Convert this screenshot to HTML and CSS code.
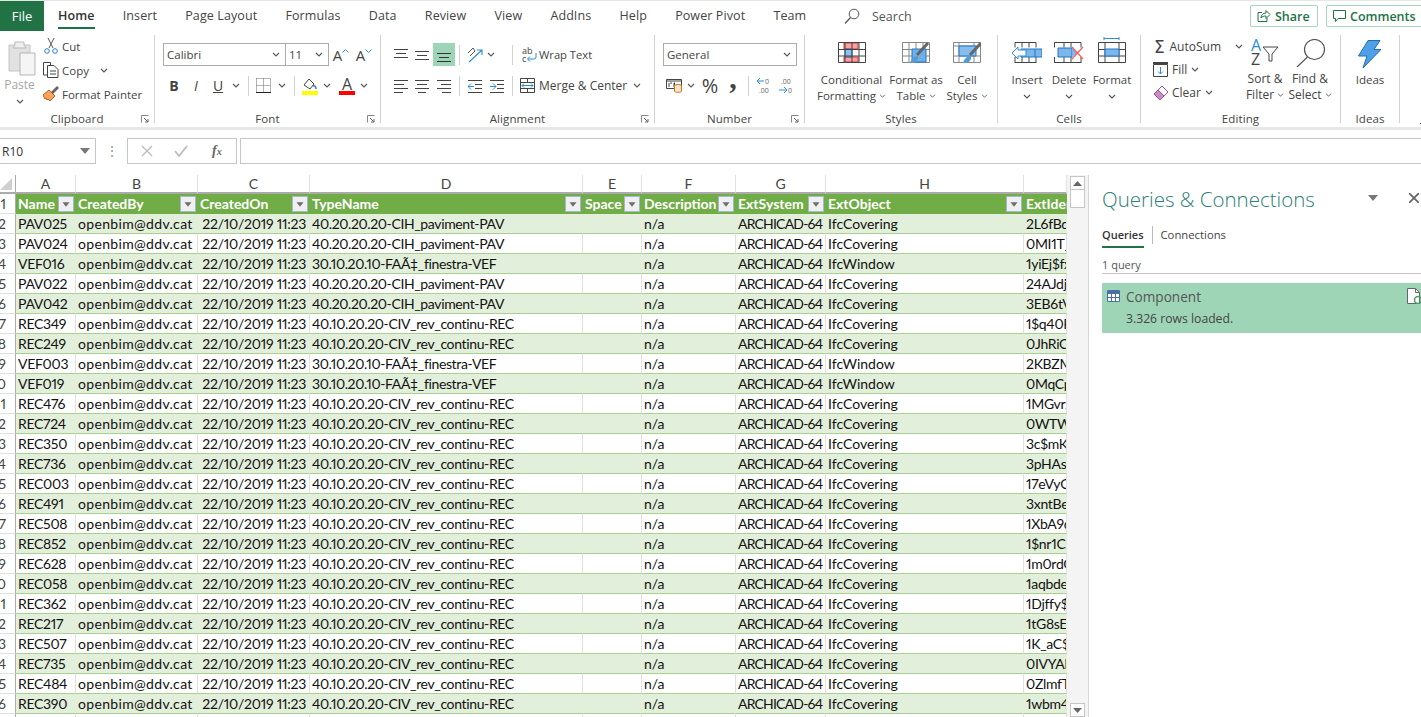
FILE: index.html
```html
<!DOCTYPE html>
<html lang="en">
<head>
<meta charset="utf-8">
<title>Excel</title>
<link rel="stylesheet" href="styles.css">
</head>
<body>
<svg class="defs" width="0" height="0">
  <symbol id="chev" viewBox="0 0 8 5"><path d="M1 1l3 3 3-3" fill="none" stroke="#555" stroke-width="1.1"/></symbol>
  <symbol id="launch" viewBox="0 0 8 8"><path d="M.5 .5h7M.5 .5v7" stroke="#888" fill="none"/><path d="M3 3l4 4M7 4v3H4" stroke="#666" fill="none"/></symbol>
  <symbol id="tri" viewBox="0 0 16 16"><path d="M4 6h8l-4 5z" fill="#6d6d6d"/></symbol>
  <symbol id="al-top" viewBox="0 0 14 14"><path d="M0 1.5h14M2 5.5h10M0 9.5h14" stroke="#444"/></symbol>
  <symbol id="al-mid" viewBox="0 0 14 14"><path d="M0 3.5h14M2 7.5h10M0 11.5h14" stroke="#444"/></symbol>
  <symbol id="al-bot" viewBox="0 0 14 14"><path d="M0 5.5h14M2 9.5h10M0 13.5h14" stroke="#333"/></symbol>
  <symbol id="al-l" viewBox="0 0 14 14"><path d="M0 1.5h14M0 5.5h10M0 9.5h14M0 13.5h9" stroke="#444"/></symbol>
  <symbol id="al-c" viewBox="0 0 14 14"><path d="M0 1.5h14M2 5.5h10M0 9.5h14M3 13.5h8" stroke="#444"/></symbol>
  <symbol id="al-r" viewBox="0 0 14 14"><path d="M0 1.5h14M4 5.5h10M0 9.5h14M5 13.5h9" stroke="#444"/></symbol>
</svg>

<header class="tabbar">
  <div class="file-tab">File</div>
  <nav class="tabs">
    <span class="tab tab-on">Home</span><span class="tab">Insert</span><span class="tab">Page Layout</span><span class="tab">Formulas</span><span class="tab">Data</span><span class="tab">Review</span><span class="tab">View</span><span class="tab">AddIns</span><span class="tab">Help</span><span class="tab">Power Pivot</span><span class="tab">Team</span>
  </nav>
  <div class="search">
    <svg width="16" height="17" viewBox="0 0 16 17"><circle cx="10" cy="6" r="4.8" fill="none" stroke="#555"/><path d="M6.5 9.5L1 15.5" stroke="#555" stroke-width="1.2"/></svg>
    <span>Search</span>
  </div>
  <button class="act act-share">
    <svg width="14" height="14" viewBox="0 0 14 14"><path d="M5 3.5H1v9h9V9" fill="none" stroke="#217346"/><path d="M4 9c0-3 2-5 5-5V1.5l4 4-4 4V7C7 7 5 7.500 4 9z" fill="none" stroke="#217346"/></svg>
    Share
  </button>
  <button class="act act-comments">
    <svg width="13" height="13" viewBox="0 0 13 13"><path d="M.5 .5h12v8H5l-2.500 3v-3h-2z" fill="none" stroke="#217346"/></svg>
    Comments
  </button>
</header>

<section class="ribbon">
  <div class="group g-clip">
    <div class="gbody clip-body">
      <div class="paste">
        <svg width="28" height="37" viewBox="0 0 28 37"><path d="M1 5h21v26H1z" fill="#e1e1e1" stroke="#c4c4c4"/><path d="M7 5V2h9v3l2 3H5z" fill="#eee" stroke="#bbb"/><path d="M12 13h15v22H12z" fill="#f5f5f5" stroke="#b5b5b5"/></svg>
        <span class="paste-t">Paste</span>
        <svg class="chev-paste" width="8" height="5"><use href="#chev"/></svg>
      </div>
      <div class="clip-col">
        <div class="clip-row">
          <svg width="16" height="16" viewBox="0 0 16 16"><path d="M5 0l5 10M11 0L6 10" stroke="#555" fill="none"/><circle cx="4" cy="13" r="2.300" fill="none" stroke="#2b7cd3"/><circle cx="12" cy="13" r="2.300" fill="none" stroke="#2b7cd3"/></svg>
          <span>Cut</span>
        </div>
        <div class="clip-row">
          <svg width="16" height="16" viewBox="0 0 16 16"><path d="M4 13H.5V.5h7V3" fill="none" stroke="#444"/><path d="M4.500 3.500H11l4 4v8H4.500z" fill="#fff" stroke="#444"/><path d="M7 9h6M7 12h6" stroke="#444"/></svg>
          <span>Copy</span>
          <svg class="chev-copy" width="8" height="5"><use href="#chev"/></svg>
        </div>
        <div class="clip-row">
          <svg width="16" height="16" viewBox="0 0 16 16"><path d="M0 9l6-5 6 6-5 5-2-2-1 1-1-2-1 1z" fill="#f4a460" stroke="#c55a11"/><path d="M8 6l6-6 2 2-6 6" fill="#666"/></svg>
          <span>Format Painter</span>
        </div>
      </div>
    </div>
    <div class="glabel">Clipboard</div>
    <svg class="launcher" width="8" height="8"><use href="#launch"/></svg>
  </div>

  <div class="group g-font">
    <div class="gbody">
      <div class="row1 font-r1">
        <div class="combo combo-font"><span>Calibri</span><svg width="8" height="5"><use href="#chev"/></svg></div>
        <div class="combo combo-size"><span>11</span><svg width="8" height="5"><use href="#chev"/></svg></div>
        <div class="grow-a">A<svg class="cap" width="7" height="4" viewBox="0 0 7 4"><path d="M.5 3.500l3-3 3 3" fill="none" stroke="#2b8fd8"/></svg></div>
        <div class="grow-a">A<svg class="cap" width="7" height="4" viewBox="0 0 7 4"><path d="M.5 .5l3 3 3-3" fill="none" stroke="#2b8fd8"/></svg></div>
      </div>
      <div class="row2 font-r2">
        <b class="fb">B</b><i class="fi">I</i><u class="fu">U</u>
        <svg width="8" height="5"><use href="#chev"/></svg>
        <span class="sep"></span>
        <svg width="15" height="15" viewBox="0 0 15 15"><path d="M.5 .5h14M.5 7.500h14M7.500 .5v14M.5 .5v14M14.500 .5v14" stroke="#666" stroke-dasharray="1 1" fill="none"/><path d="M0 14.500h15" stroke="#222"/></svg>
        <svg width="8" height="5"><use href="#chev"/></svg>
        <span class="sep"></span>
        <svg width="16" height="18" viewBox="0 0 16 18"><path d="M2 8l5-6 5 5-4 5z" fill="#fff" stroke="#444"/><path d="M11 9c2-1 3 1 3 3" stroke="#2b7cd3" stroke-width="1.500" fill="none"/><rect y="14" width="16" height="4" fill="#ff0"/></svg>
        <svg width="8" height="5"><use href="#chev"/></svg>
        <div class="fcolor">A<span></span></div>
        <svg width="8" height="5"><use href="#chev"/></svg>
      </div>
    </div>
    <div class="glabel">Font</div>
    <svg class="launcher" width="8" height="8"><use href="#launch"/></svg>
  </div>

  <div class="group g-align">
    <div class="gbody">
      <div class="row1 al-r1">
        <svg width="14" height="14"><use href="#al-top"/></svg>
        <svg width="14" height="14"><use href="#al-mid"/></svg>
        <span class="al-on"><svg width="14" height="14"><use href="#al-bot"/></svg></span>
        <span class="sep"></span>
        <svg width="17" height="16" viewBox="0 0 17 16"><path d="M1 6l5-5 2 3M3 9l5-5" stroke="#555" fill="none"/><path d="M2 15L15 3M10 3h5v5" stroke="#2b8fd8" stroke-width="1.100" fill="none"/></svg>
        <svg width="8" height="5"><use href="#chev"/></svg>
        <i></i>
        <span class="sep"></span>
        <i></i>
        <svg width="15" height="16" viewBox="0 0 15 16"><text x="0" y="7" class="svgt">ab</text><text x="0" y="15" class="svgt">c</text><path d="M14 6v4a2 2 0 0 1-2 2H6M8 9.500L5.500 12 8 14.500" stroke="#2b8fd8" fill="none"/></svg>
        <span class="rt">Wrap Text</span>
      </div>
      <div class="row2 al-r2">
        <svg width="14" height="14"><use href="#al-l"/></svg>
        <svg width="14" height="14"><use href="#al-c"/></svg>
        <svg width="14" height="14"><use href="#al-r"/></svg>
        <span class="sep"></span>
        <svg width="14" height="14" viewBox="0 0 14 14"><path d="M0 1.500h14M7 5.500h7M7 9.500h7M0 13.500h14" stroke="#444"/><path d="M6 7.500H0M3 4.500l-3 3 3 3" stroke="#2b8fd8" fill="none"/></svg>
        <svg width="14" height="14" viewBox="0 0 14 14"><path d="M0 1.500h14M7 5.500h7M7 9.500h7M0 13.500h14" stroke="#444"/><path d="M0 7.500h6M3 4.500l3 3-3 3" stroke="#2b8fd8" fill="none"/></svg>
        <span class="sep"></span>
        <i></i>
        <svg width="15" height="15" viewBox="0 0 15 15"><path d="M.5 .5h14v14H.5zM.5 4.500h14M.5 10.500h14M7.500 .5v4M7.500 10.500v4" fill="none" stroke="#444"/><path d="M2 7.500h11M4 5.500l-2 2 2 2M11 5.500l2 2-2 2" stroke="#2b8fd8" fill="none"/></svg>
        <span class="rt">Merge &amp; Center</span>
        <svg width="8" height="5"><use href="#chev"/></svg>
      </div>
    </div>
    <div class="glabel">Alignment</div>
    <svg class="launcher" width="8" height="8"><use href="#launch"/></svg>
  </div>

  <div class="group g-num">
    <div class="gbody">
      <div class="row1 num-r1">
        <div class="combo combo-num"><span>General</span><svg width="8" height="5"><use href="#chev"/></svg></div>
      </div>
      <div class="row2 num-r2">
        <svg width="16" height="15" viewBox="0 0 16 15"><path d="M.5 1.500h15v9H.5zM.5 3h15" fill="none" stroke="#444"/><path d="M3 5v4M6 5H4M9 5h-1v4" stroke="#444"/><ellipse cx="12" cy="8" rx="3.500" ry="1.500" fill="#fbe5d0" stroke="#d9730d"/><path d="M8.500 8v5.500c0 1 7 1 7 0V8" fill="#fbe5d0" stroke="#d9730d"/></svg>
        <svg width="8" height="5"><use href="#chev"/></svg>
        <span class="pct">%</span>
        <span class="comma">,</span>
        <span class="sep"></span>
        <i></i>
        <svg width="16" height="18" viewBox="0 0 16 18"><text x="9" y="7" class="svgn">0</text><text x="3" y="16" class="svgn">.00</text><path d="M8 4H1M4 1L1 4l3 3" stroke="#2b8fd8" fill="none"/></svg>
        <i></i>
        <svg width="16" height="18" viewBox="0 0 16 18"><text x="3" y="7" class="svgn">.00</text><text x="10" y="16" class="svgn">0</text><path d="M1 13h8M6 10l3 3-3 3" stroke="#2b8fd8" fill="none"/></svg>
      </div>
    </div>
    <div class="glabel">Number</div>
    <svg class="launcher" width="8" height="8"><use href="#launch"/></svg>
  </div>

  <div class="group g-styles">
    <div class="gbody bigs styles-cols">
      <div class="big">
        <svg class="bi" width="28" height="21" viewBox="0 0 28 21"><path d="M6 1h14v6H6zM6 15h14v5H6z" fill="#f9a0a0" stroke="#d9363e"/><path d="M7 7h7v8H7z" fill="#8cc0ee" stroke="#1e78c8"/><path d="M.5 .5h27v20H.5zM.5 7.500h27M.5 14h27M7 .5v20M14 .5v20M21 .5v20" fill="none" stroke="#444"/></svg>
        <span>Conditional</span><span>Formatting <svg width="7" height="4"><use href="#chev"/></svg></span>
      </div>
      <div class="big">
        <svg class="bi" width="28" height="21" viewBox="0 0 28 21"><path d="M.5 .5h27v20H.5zM.5 7.500h27M.5 14h27M7 .5v20M14 .5v20M21 .5v20" fill="none" stroke="#888"/><path d="M10 7h14v13H10z" fill="#6fb0e8" stroke="#1e78c8"/><path d="M26 1L15 13" stroke="#666" stroke-width="3"/><path d="M8 21c1-4 4-7 7-7 3 1 0 6-3 7z" fill="#5a9bd5"/></svg>
        <span>Format as</span><span>Table <svg width="7" height="4"><use href="#chev"/></svg></span>
      </div>
      <div class="big">
        <svg class="bi" width="28" height="21" viewBox="0 0 28 21"><path d="M.5 .5h27v20H.5zM.5 4h27M.5 14h27M6 .5v20M21 .5v20" fill="none" stroke="#888"/><path d="M6 4h17v10H6z" fill="#86bdee" stroke="#1e78c8"/><path d="M28 1L17 13" stroke="#666" stroke-width="3"/><path d="M10 21c1-4 4-7 7-7 3 1 0 6-3 7z" fill="#5a9bd5"/></svg>
        <span>Cell</span><span>Styles <svg width="7" height="4"><use href="#chev"/></svg></span>
      </div>
    </div>
    <div class="glabel">Styles</div>
  </div>

  <div class="group g-cells">
    <div class="gbody bigs cells-cols">
      <div class="big">
        <svg class="bi" width="30" height="21" viewBox="0 0 30 21"><path d="M3 .5h21M3 20.500h21M3 .5v5M3 15v6M10 .5v5M10 15v6M17 .5v5M17 15v6M24 .5v5M24 15v6" stroke="#444" fill="none"/><path d="M9 7h21v8H9z" fill="#7cb6ea" stroke="#1e78c8"/><path d="M23 7v8" stroke="#1e78c8"/><path d="M14 8H6V5l-6 6 6 6v-3h8z" fill="#fff" stroke="#2b8fd8"/></svg>
        <span>Insert</span><svg class="cv" width="8" height="5"><use href="#chev"/></svg>
      </div>
      <div class="big">
        <svg class="bi" width="30" height="21" viewBox="0 0 30 21"><path d="M.5 .5H27M.5 20.500H27M.5 .5v5M.5 15v6M10 .5v5M10 15v6M17 .5v5M17 15v6M27 .5v5M27 15v6" stroke="#444" fill="none"/><path d="M4 6h14v9H4z" fill="#7cb6ea" stroke="#1e78c8"/><path d="M18 6l6 4.500-6 4.500" fill="#7cb6ea"/><path d="M18 5l11 12M29 5L18 17" stroke="#ff5a5a" stroke-width="1.200"/></svg>
        <span>Delete</span><svg class="cv" width="8" height="5"><use href="#chev"/></svg>
      </div>
      <div class="big">
        <svg class="bi bi-fmt" width="28" height="26" viewBox="0 0 28 26"><path d="M6 1.500h15M6 0v3M21 0v3" stroke="#2b8fd8" fill="none"/><path d="M.5 5.500h27v20H.5zM.5 12.500h27M.5 19h27M7 5.500v20M21 5.500v20" fill="none" stroke="#444"/><path d="M7 12h14v7H7z" fill="#7cb6ea" stroke="#1e78c8"/></svg>
        <span>Format</span><svg class="cv" width="8" height="5"><use href="#chev"/></svg>
      </div>
    </div>
    <div class="glabel">Cells</div>
  </div>

  <div class="group g-edit">
    <div class="gbody edit-body">
      <div class="edit-col">
        <div class="edit-row">
          <span class="sigma">Σ</span><span>AutoSum</span><svg class="chev-auto" width="8" height="5"><use href="#chev"/></svg>
        </div>
        <div class="edit-row er-fill">
          <svg width="15" height="15" viewBox="0 0 15 15"><path d="M.5 2.500h14v12H.5z" fill="none" stroke="#444"/><path d="M0 1h15" stroke="#444" stroke-width="2"/><path d="M7.500 5v7M5 9.500l2.500 2.500L10 9.500" stroke="#2b8fd8" fill="none"/></svg>
          <span>Fill</span><svg width="8" height="5"><use href="#chev"/></svg>
        </div>
        <div class="edit-row er-clear">
          <svg width="16" height="16" viewBox="0 0 16 16"><path d="M1 9l8-8 6 6-8 8z" fill="#fff" stroke="#a64ca6"/><path d="M1 9l4-4 6 6-4 4z" fill="#c58fc5" stroke="#a64ca6"/></svg>
          <span>Clear</span><svg width="8" height="5"><use href="#chev"/></svg>
        </div>
      </div>
      <div class="big big-tall">
        <svg class="bi-tall" width="28" height="28" viewBox="0 0 28 28"><text x="0" y="12" class="az az-a">A</text><text x="0" y="26" class="az">Z</text><path d="M12 8h15l-6 7v7h-3v-7z" fill="#fff" stroke="#444"/></svg>
        <span>Sort &amp;</span><span>Filter <svg width="7" height="4"><use href="#chev"/></svg></span>
      </div>
      <div class="big big-tall">
        <svg class="bi-tall" width="29" height="28" viewBox="0 0 29 28"><circle cx="18.500" cy="10.500" r="10" fill="#fff" stroke="#555" stroke-width="1.200"/><path d="M11.500 18L1 28" stroke="#555" stroke-width="1.200"/></svg>
        <span>Find &amp;</span><span>Select <svg width="7" height="4"><use href="#chev"/></svg></span>
      </div>
    </div>
    <div class="glabel">Editing</div>
  </div>

  <div class="group g-ideas">
    <div class="gbody ideas-body">
      <div class="big big-ideas">
        <svg class="bi-idea" width="23" height="28" viewBox="0 0 23 28"><path d="M10 .5h12l-6 9h7L5 28l4-12H.5z" fill="#4fa0e6" stroke="#1c6fb8"/></svg>
        <span>Ideas</span>
      </div>
    </div>
    <div class="glabel">Ideas</div>
  </div>
  <div class="g-end"><svg width="8" height="5" viewBox="0 0 8 5"><path d="M1 4l3-3 3 3" fill="none" stroke="#555"/></svg></div>
</section>

<section class="fbar">
  <div class="namebox"><span>R10</span><svg width="10" height="6" viewBox="0 0 10 6"><path d="M0 0h10L5 6z" fill="#777"/></svg></div>
  <div class="fdots">⋮</div>
  <div class="fbtns">
    <svg width="12" height="12" viewBox="0 0 12 12"><path d="M1 1l10 10M11 1L1 11" stroke="#bbb" stroke-width="1.400"/></svg>
    <svg width="14" height="12" viewBox="0 0 14 12"><path d="M1 6l4 5 8-10" stroke="#bbb" stroke-width="1.800" fill="none"/></svg>
    <span class="fx">f<small>x</small></span>
  </div>
  <div class="finput"></div>
</section>

<main class="sheetwrap">
  <div class="grid-clip">
    <table class="sheet">
      <colgroup><col class="c0"><col class="c1"><col class="c2"><col class="c3"><col class="c4"><col class="c5"><col class="c6"><col class="c7"><col class="c8"><col class="c9"></colgroup>
      <thead>
        <tr class="colhead"><th class="corner"><svg width="12" height="12" viewBox="0 0 12 12"><path d="M12 0v12H0z" fill="#d0d0d0"/></svg></th><th>A</th><th>B</th><th>C</th><th>D</th><th>E</th><th>F</th><th>G</th><th>H</th><th></th></tr>
      </thead>
      <tbody>
        <tr class="thead"><th class="rh">1</th><td>Name<span class="fbtn"><svg width="14" height="14"><use href="#tri"/></svg></span></td><td>CreatedBy<span class="fbtn"><svg width="14" height="14"><use href="#tri"/></svg></span></td><td>CreatedOn<span class="fbtn"><svg width="14" height="14"><use href="#tri"/></svg></span></td><td>TypeName<span class="fbtn"><svg width="14" height="14"><use href="#tri"/></svg></span></td><td>Space<span class="fbtn"><svg width="14" height="14"><use href="#tri"/></svg></span></td><td>Description<span class="fbtn"><svg width="14" height="14"><use href="#tri"/></svg></span></td><td>ExtSystem<span class="fbtn"><svg width="14" height="14"><use href="#tri"/></svg></span></td><td>ExtObject<span class="fbtn"><svg width="14" height="14"><use href="#tri"/></svg></span></td><td>ExtIdentifier</td></tr>
        <tr><th class="rh">2</th><td>PAV025</td><td>openbim@ddv.cat</td><td class="dt">22/10/2019 11:23</td><td>40.20.20.20-CIH_paviment-PAV</td><td></td><td>n/a</td><td>ARCHICAD-64</td><td>IfcCovering</td><td>2L6fBdx9</td></tr>
        <tr><th class="rh">3</th><td>PAV024</td><td>openbim@ddv.cat</td><td class="dt">22/10/2019 11:23</td><td>40.20.20.20-CIH_paviment-PAV</td><td></td><td>n/a</td><td>ARCHICAD-64</td><td>IfcCovering</td><td>0MI1T_x9</td></tr>
        <tr><th class="rh">4</th><td>VEF016</td><td>openbim@ddv.cat</td><td class="dt">22/10/2019 11:23</td><td>30.10.20.10-FAÃ‡_finestra-VEF</td><td></td><td>n/a</td><td>ARCHICAD-64</td><td>IfcWindow</td><td>1yiEj$fx9</td></tr>
        <tr><th class="rh">5</th><td>PAV022</td><td>openbim@ddv.cat</td><td class="dt">22/10/2019 11:23</td><td>40.20.20.20-CIH_paviment-PAV</td><td></td><td>n/a</td><td>ARCHICAD-64</td><td>IfcCovering</td><td>24AJdjx9</td></tr>
        <tr><th class="rh">6</th><td>PAV042</td><td>openbim@ddv.cat</td><td class="dt">22/10/2019 11:23</td><td>40.20.20.20-CIH_paviment-PAV</td><td></td><td>n/a</td><td>ARCHICAD-64</td><td>IfcCovering</td><td>3EB6tVx9</td></tr>
        <tr><th class="rh">7</th><td>REC349</td><td>openbim@ddv.cat</td><td class="dt">22/10/2019 11:23</td><td>40.10.20.20-CIV_rev_continu-REC</td><td></td><td>n/a</td><td>ARCHICAD-64</td><td>IfcCovering</td><td>1$q40Fx9</td></tr>
        <tr><th class="rh">8</th><td>REC249</td><td>openbim@ddv.cat</td><td class="dt">22/10/2019 11:23</td><td>40.10.20.20-CIV_rev_continu-REC</td><td></td><td>n/a</td><td>ARCHICAD-64</td><td>IfcCovering</td><td>0JhRiCx9</td></tr>
        <tr><th class="rh">9</th><td>VEF003</td><td>openbim@ddv.cat</td><td class="dt">22/10/2019 11:23</td><td>30.10.20.10-FAÃ‡_finestra-VEF</td><td></td><td>n/a</td><td>ARCHICAD-64</td><td>IfcWindow</td><td>2KBZMx9</td></tr>
        <tr><th class="rh">10</th><td>VEF019</td><td>openbim@ddv.cat</td><td class="dt">22/10/2019 11:23</td><td>30.10.20.10-FAÃ‡_finestra-VEF</td><td></td><td>n/a</td><td>ARCHICAD-64</td><td>IfcWindow</td><td>0MqCpx9</td></tr>
        <tr><th class="rh">11</th><td>REC476</td><td>openbim@ddv.cat</td><td class="dt">22/10/2019 11:23</td><td>40.10.20.20-CIV_rev_continu-REC</td><td></td><td>n/a</td><td>ARCHICAD-64</td><td>IfcCovering</td><td>1MGvrx9</td></tr>
        <tr><th class="rh">12</th><td>REC724</td><td>openbim@ddv.cat</td><td class="dt">22/10/2019 11:23</td><td>40.10.20.20-CIV_rev_continu-REC</td><td></td><td>n/a</td><td>ARCHICAD-64</td><td>IfcCovering</td><td>0WTWx9</td></tr>
        <tr><th class="rh">13</th><td>REC350</td><td>openbim@ddv.cat</td><td class="dt">22/10/2019 11:23</td><td>40.10.20.20-CIV_rev_continu-REC</td><td></td><td>n/a</td><td>ARCHICAD-64</td><td>IfcCovering</td><td>3c$mKx9</td></tr>
        <tr><th class="rh">14</th><td>REC736</td><td>openbim@ddv.cat</td><td class="dt">22/10/2019 11:23</td><td>40.10.20.20-CIV_rev_continu-REC</td><td></td><td>n/a</td><td>ARCHICAD-64</td><td>IfcCovering</td><td>3pHAsx9</td></tr>
        <tr><th class="rh">15</th><td>REC003</td><td>openbim@ddv.cat</td><td class="dt">22/10/2019 11:23</td><td>40.10.20.20-CIV_rev_continu-REC</td><td></td><td>n/a</td><td>ARCHICAD-64</td><td>IfcCovering</td><td>17eVyCx9</td></tr>
        <tr><th class="rh">16</th><td>REC491</td><td>openbim@ddv.cat</td><td class="dt">22/10/2019 11:23</td><td>40.10.20.20-CIV_rev_continu-REC</td><td></td><td>n/a</td><td>ARCHICAD-64</td><td>IfcCovering</td><td>3xntBex9</td></tr>
        <tr><th class="rh">17</th><td>REC508</td><td>openbim@ddv.cat</td><td class="dt">22/10/2019 11:23</td><td>40.10.20.20-CIV_rev_continu-REC</td><td></td><td>n/a</td><td>ARCHICAD-64</td><td>IfcCovering</td><td>1XbA9dx9</td></tr>
        <tr><th class="rh">18</th><td>REC852</td><td>openbim@ddv.cat</td><td class="dt">22/10/2019 11:23</td><td>40.10.20.20-CIV_rev_continu-REC</td><td></td><td>n/a</td><td>ARCHICAD-64</td><td>IfcCovering</td><td>1$nr1Cx9</td></tr>
        <tr><th class="rh">19</th><td>REC628</td><td>openbim@ddv.cat</td><td class="dt">22/10/2019 11:23</td><td>40.10.20.20-CIV_rev_continu-REC</td><td></td><td>n/a</td><td>ARCHICAD-64</td><td>IfcCovering</td><td>1m0rdCx9</td></tr>
        <tr><th class="rh">20</th><td>REC058</td><td>openbim@ddv.cat</td><td class="dt">22/10/2019 11:23</td><td>40.10.20.20-CIV_rev_continu-REC</td><td></td><td>n/a</td><td>ARCHICAD-64</td><td>IfcCovering</td><td>1aqbdex9</td></tr>
        <tr><th class="rh">21</th><td>REC362</td><td>openbim@ddv.cat</td><td class="dt">22/10/2019 11:23</td><td>40.10.20.20-CIV_rev_continu-REC</td><td></td><td>n/a</td><td>ARCHICAD-64</td><td>IfcCovering</td><td>1Djffy$x9</td></tr>
        <tr><th class="rh">22</th><td>REC217</td><td>openbim@ddv.cat</td><td class="dt">22/10/2019 11:23</td><td>40.10.20.20-CIV_rev_continu-REC</td><td></td><td>n/a</td><td>ARCHICAD-64</td><td>IfcCovering</td><td>1tG8sEx9</td></tr>
        <tr><th class="rh">23</th><td>REC507</td><td>openbim@ddv.cat</td><td class="dt">22/10/2019 11:23</td><td>40.10.20.20-CIV_rev_continu-REC</td><td></td><td>n/a</td><td>ARCHICAD-64</td><td>IfcCovering</td><td>1K_aC$x9</td></tr>
        <tr><th class="rh">24</th><td>REC735</td><td>openbim@ddv.cat</td><td class="dt">22/10/2019 11:23</td><td>40.10.20.20-CIV_rev_continu-REC</td><td></td><td>n/a</td><td>ARCHICAD-64</td><td>IfcCovering</td><td>0IVYAFx9</td></tr>
        <tr><th class="rh">25</th><td>REC484</td><td>openbim@ddv.cat</td><td class="dt">22/10/2019 11:23</td><td>40.10.20.20-CIV_rev_continu-REC</td><td></td><td>n/a</td><td>ARCHICAD-64</td><td>IfcCovering</td><td>0ZlmfTx9</td></tr>
        <tr><th class="rh">26</th><td>REC390</td><td>openbim@ddv.cat</td><td class="dt">22/10/2019 11:23</td><td>40.10.20.20-CIV_rev_continu-REC</td><td></td><td>n/a</td><td>ARCHICAD-64</td><td>IfcCovering</td><td>1wbm4x9</td></tr>
        <tr><th class="rh"></th><td></td><td></td><td></td><td></td><td></td><td></td><td></td><td></td><td></td></tr>
      </tbody>
    </table>
  </div>
  <div class="vscroll">
    <div class="sbtn"><svg width="9" height="5" viewBox="0 0 9 5"><path d="M0 5h9L4.500 0z" fill="#666"/></svg></div>
    <div class="sthumb"></div>
    <div class="strack"></div>
    <div class="sbtn"><svg width="9" height="5" viewBox="0 0 9 5"><path d="M0 0h9L4.500 5z" fill="#666"/></svg></div>
  </div>
  <aside class="panel">
    <div class="p-title">
      <h2>Queries &amp; Connections</h2>
      <svg class="p-caret" width="10" height="6" viewBox="0 0 10 6"><path d="M0 0h10L5 6z" fill="#777"/></svg>
      <svg class="p-x" width="10" height="10" viewBox="0 0 10 10"><path d="M0 0l10 10M10 0L0 10" stroke="#666" stroke-width="1.800"/></svg>
    </div>
    <div class="p-tabs">
      <span class="p-tab p-tab-on">Queries</span>
      <span class="p-sep"></span>
      <span class="p-tab">Connections</span>
    </div>
    <div class="p-count">1 query</div>
    <div class="p-card">
      <div class="p-card-h">
        <svg width="13" height="12" viewBox="0 0 13 12"><path d="M.5 .5h12v11H.5z" fill="#fff" stroke="#4a6fa5"/><path d="M0 1h13v3H0z" fill="#4a6fa5"/><path d="M.5 7.500h12M4.500 4v7M8.500 4v7" stroke="#4a6fa5"/></svg>
        <span class="p-name">Component</span>
        <svg class="p-file" width="14" height="16" viewBox="0 0 14 16"><path d="M.5 .5h8l4 4v11H.5z" fill="#fff" stroke="#666"/><path d="M8.500 .5v4h4" fill="none" stroke="#666"/><circle cx="11" cy="12" r="3.500" fill="none" stroke="#4a9a6a" stroke-width="1.500"/></svg>
      </div>
      <div class="p-rows">3.326 rows loaded.</div>
    </div>
  </aside>
</main>
</body>
</html>
```

FILE: styles.css
```css
* { box-sizing: border-box; }
html, body { margin: 0; padding: 0; }
body { width: 1421px; height: 717px; overflow: hidden; background: #fff; font-family: "Open Sans", "Noto Sans", sans-serif; font-size: 12px; color: #444; }
.defs { position: absolute; }
svg { display: block; flex: none; }
button { font: inherit; background: #fff; }

/* tab bar */
.tabbar { height: 31px; display: flex; align-items: center; border-top: 1px solid #e6e6e6; }
.file-tab { width: 44px; height: 30px; background: #217346; color: #fff; font-size: 13px; line-height: 30px; text-align: center; flex: none; }
.tabs { display: flex; gap: 28.2px; margin-left: 14px; width: 786px; height: 30px; flex: none; }
.tab { font-size: 12.5px; line-height: 30px; color: #444; white-space: nowrap; letter-spacing: .1px; }
.tab-on { font-weight: 600; position: relative; color: #333; }
.tab-on::after { content: ""; position: absolute; left: 0; right: 0; bottom: 2px; height: 2px; background: #217346; }
.search { display: flex; align-items: center; gap: 12px; width: 406px; color: #555; font-size: 12.5px; flex: none; }
.act { height: 22px; border: 1px solid #a8d5bd; border-radius: 2px; display: flex; align-items: center; gap: 4px; color: #217346; font-weight: 600; font-size: 12.5px; padding: 0 6px; flex: none; }
.act-share { width: 68px; }
.act-comments { width: 100px; margin-left: 8px; }

/* ribbon */
.ribbon { height: 99px; display: flex; padding-top: 4px; border-bottom: 3px solid #e8e8e8; }
.group { position: relative; height: 88px; display: flex; flex-direction: column; border-right: 1px solid #d2d2d2; flex: none; }
.gbody { height: 78px; }
.glabel { height: 10px; line-height: 12px; text-align: center; color: #444; font-size: 11.5px; letter-spacing: .1px; }
.launcher { position: absolute; right: 5px; bottom: 0; }
.g-clip { width: 155px; }
.g-font { width: 226px; }
.g-align { width: 274px; }
.g-num { width: 150px; }
.g-styles { width: 193px; }
.g-cells { width: 143px; }
.g-edit { width: 200px; }
.g-ideas { width: 59px; }

.clip-body { display: flex; padding-left: 5px; }
.paste { width: 29px; display: flex; flex-direction: column; align-items: center; padding-top: 5px; }
.paste svg { margin-left: 5px; }
.paste-t { color: #a8a8a8; line-height: 16px; }
.paste .chev-paste { margin: 6px 0 0 0; }
.clip-col { margin-left: 9px; display: flex; flex-direction: column; gap: 2px; font-size: 11.5px; }
.clip-row { height: 22px; display: flex; align-items: center; gap: 3px; white-space: nowrap; }
.chev-copy { margin-left: 8px; }

.row1, .row2 { display: grid; align-items: center; justify-items: center; height: 23px; margin-top: 8px; }
.sep { width: 1px; height: 20px; background: #d2d2d2; display: block; }
.combo { height: 23px; border: 1px solid #ababab; display: flex; align-items: center; justify-content: space-between; padding: 0 5px 0 3px; font-size: 11.5px; width: 100%; background: #fff; }
.font-r1 { grid-template-columns: 123px 43px 24px 22px; margin-left: 8px; }
.combo-size { margin-left: -1px; width: 44px; }
.grow-a { font-size: 15px; display: flex; line-height: 18px; gap: 0; }
.cap { margin-top: 3px; }
.font-r2 { grid-template-columns: 22px 22px 22px 14px 10px 21px 15px 11px 20px 14px 26px 8px; margin-left: 8px; }
.fb { font-size: 14px; font-weight: 700; }
.fi { font-size: 14px; }
.fu { font-size: 14px; }
.fcolor { width: 16px; font-size: 16px; line-height: 14px; text-align: center; }
.fcolor span { display: block; height: 4px; background: #f00; }

.al-r1 { grid-template-columns: 21px 22px 22px 8px 25px 6px 18px 1px 9px 15px auto; margin-left: 9px; width: 264px; justify-content: start; }
.al-on { width: 22px; height: 23px; background: #9fd5b7; display: flex; align-items: center; justify-content: center; }
.al-r2 { grid-template-columns: 21px 22px 22px 8px 24px 20px 10px 3px 15px 98px 8px; margin-left: 9px; width: 264px; justify-content: start; }
.al-r1 .rt, .al-r2 .rt { justify-self: start; white-space: nowrap; }
.al-r1 .rt { margin-left: 2px; font-size: 11.2px; }
.al-r2 .rt { margin-left: 4px; font-size: 12px; }
.svgt { font: 9px "Open Sans", sans-serif; fill: #444; }
.svgn { font: 7px "Open Sans", sans-serif; fill: #666; }

.num-r1 { grid-template-columns: 134px; margin-left: 8px; }
.combo-num { padding-left: 3px; }
.num-r2 { grid-template-columns: 22px 12px 26px 20px 10px 3px 16px 6px 15px; margin-left: 8px; justify-content: start; }
.pct { font-size: 20px; line-height: 20px; }
.comma { font-size: 30px; font-weight: 700; line-height: 16px; font-family: "Liberation Serif", serif; margin-top: -16px; }

.bigs { display: grid; }
.styles-cols { grid-template-columns: 83px 46px 56px; padding-left: 5px; }
.cells-cols { grid-template-columns: 42px 42px 44px; padding-left: 8px; }
.big { display: flex; flex-direction: column; align-items: center; line-height: 16px; white-space: nowrap; font-size: 11.5px; }
.big span { display: flex; align-items: center; gap: 3px; }
.big-tall { font-size: 12px; }
.bi { margin: 7px 0 9px; }
.bi-fmt { margin: 2px 0 9px; }
.cv { margin-top: 6px; }
.edit-body { display: grid; grid-template-columns: 89px 44px 46px; padding-left: 13px; }
.edit-col { display: flex; flex-direction: column; }
.edit-row { height: 23px; display: flex; align-items: center; gap: 4px; white-space: nowrap; }
.er-fill > svg:first-child { margin-left: -1px; }
.er-clear > svg:first-child { margin: 0 -1px; }
.sigma { font-size: 17px; width: 14px; line-height: 16px; font-family: "DejaVu Sans", sans-serif; color: #444; }
.chev-auto { margin-left: 10px; }
.bi-tall { margin: 4px 0 4px; }
.az { font: 16px "Open Sans", sans-serif; fill: #444; }
.az-a { fill: #2b8fd8; }
.ideas-body { display: flex; justify-content: center; }
.bi-idea { margin: 5px 0 4px; }
.g-end { flex: 1; display: flex; align-items: flex-end; justify-content: flex-end; height: 90px; }
.g-end svg { margin-right: -6px; }

/* formula bar */
.fbar { height: 26px; margin-top: 8px; display: flex; }
.namebox { width: 96px; height: 26px; border: 1px solid #c6c6c6; border-left: 0; display: flex; align-items: center; justify-content: space-between; padding: 0 5px 0 2px; font-size: 12px; color: #333; }
.fdots { width: 31px; text-align: center; color: #999; line-height: 26px; font-size: 14px; }
.fbtns { width: 110px; border: 1px solid #c6c6c6; display: flex; align-items: center; padding-left: 13px; gap: 21px; }
.fx { font-family: "Liberation Serif", serif; font-style: italic; font-weight: 700; font-size: 14px; color: #666; margin-left: 3px; }
.fx small { font-size: 10px; }
.finput { flex: 1; margin-left: 3px; border: 1px solid #c6c6c6; border-right: 0; }

/* sheet */
.sheetwrap { margin-top: 11px; height: 542px; display: flex; }
.grid-clip { width: 1067px; overflow: hidden; flex: none; }
.sheet { border-collapse: separate; border-spacing: 0; table-layout: fixed; width: 1067px; font-family: Lato, "Open Sans", sans-serif; font-size: 14px; color: #111; font-variant-numeric: proportional-nums; }
.c0 { width: 16px; } .c1 { width: 60px; } .c2 { width: 122px; } .c3 { width: 112px; } .c4 { width: 273px; } .c5 { width: 59px; } .c6 { width: 94px; } .c7 { width: 90px; } .c8 { width: 198px; } .c9 { width: 43px; }
.colhead th { height: 19px; font-weight: 400; font-size: 14px; color: #444; padding: 0; border-right: 1px solid #e0e0e0; border-bottom: 2px solid #ababab; }
.colhead .corner { border-right: 1px solid #ababab; }
.sheet td { height: 20px; padding: 1px 0 0 2px; white-space: nowrap; overflow: hidden; position: relative; border-bottom: 1px solid #a9d08e; border-right: 1px solid #e0e0e0; line-height: 18px; }
.sheet tbody td:nth-child(2) { letter-spacing: -.3px; }
.sheet tbody td:nth-child(3) { letter-spacing: .33px; }
.sheet tbody td:nth-child(4) { letter-spacing: -.25px; }
.sheet tbody td:nth-child(5) { letter-spacing: -.36px; }
.sheet tbody td:nth-child(8) { letter-spacing: -.8px; }
.sheet tbody td:nth-child(10) { letter-spacing: -.3px; }
.sheet tbody tr:nth-child(even) td { background: #e2efda; border-right-color: #e2efda; }
.sheet .dt { text-align: right; padding-right: 3px; }
.rh { direction: rtl; font-weight: 400; padding: 0 10px 0 0; height: 20px; color: #444; border-right: 1px solid #ababab; border-bottom: 1px solid #e0e0e0; background: #fff; white-space: nowrap; }
.sheet tbody tr.thead td { background: #70ad47; color: #fff; font-weight: 700; border-right: 0; border-bottom: 0; padding-bottom: 1px; letter-spacing: 0; }
.fbtn { position: absolute; right: 2px; top: 2px; width: 16px; height: 16px; background: #f0f0f0; border: 1px solid #a6b8cf; display: block; }

/* scrollbar */
.vscroll { width: 21px; background: #f4f4f4; padding: 1px 3px 0; display: flex; flex-direction: column; flex: none; }
.sbtn { height: 14px; background: #fff; border: 1px solid #c6c6c6; display: flex; align-items: center; justify-content: center; flex: none; }
.sthumb { height: 18px; background: #fff; border: 1px solid #c6c6c6; border-top: 0; flex: none; }
.strack { flex: 1; }

/* panel */
.panel { flex: 1; border-left: 1px solid #d6d6d6; padding-left: 13px; min-width: 0; overflow: hidden; }
.p-title { height: 48px; display: flex; align-items: center; position: relative; }
.p-title h2 { margin: 0; font-weight: 300; font-size: 20.5px; color: #2c8078; white-space: nowrap; font-family: "Open Sans", sans-serif; }
.p-caret { position: absolute; left: 266px; top: 20px; }
.p-x { position: absolute; left: 307px; top: 18px; }
.p-tabs { height: 24px; display: flex; align-items: center; gap: 8px; }
.p-tab { font-size: 11.3px; color: #444; position: relative; line-height: 20px; }
.p-tab-on { font-weight: 600; font-size: 11px; color: #333; }
.p-tab-on::after { content: ""; position: absolute; left: 0; right: 0; bottom: -3px; height: 2px; background: #217346; }
.p-sep { width: 1px; height: 18px; background: #bbb; }
.p-count { margin-top: 8px; height: 19px; line-height: 19px; font-size: 11px; color: #555; border-bottom: 1px solid #c4c4c4; }
.p-card { margin-top: 9px; height: 50px; background: #9fd5b7; padding: 3px 0 0 5px; color: #555; position: relative; }
.p-card-h { display: flex; align-items: center; gap: 6px; height: 20px; }
.p-name { font-size: 13.6px; color: #555; }
.p-file { position: absolute; left: 305px; top: 5px; }
.p-rows { margin: 3px 0 0 19px; font-size: 12.2px; line-height: 20px; color: #444; }
```
